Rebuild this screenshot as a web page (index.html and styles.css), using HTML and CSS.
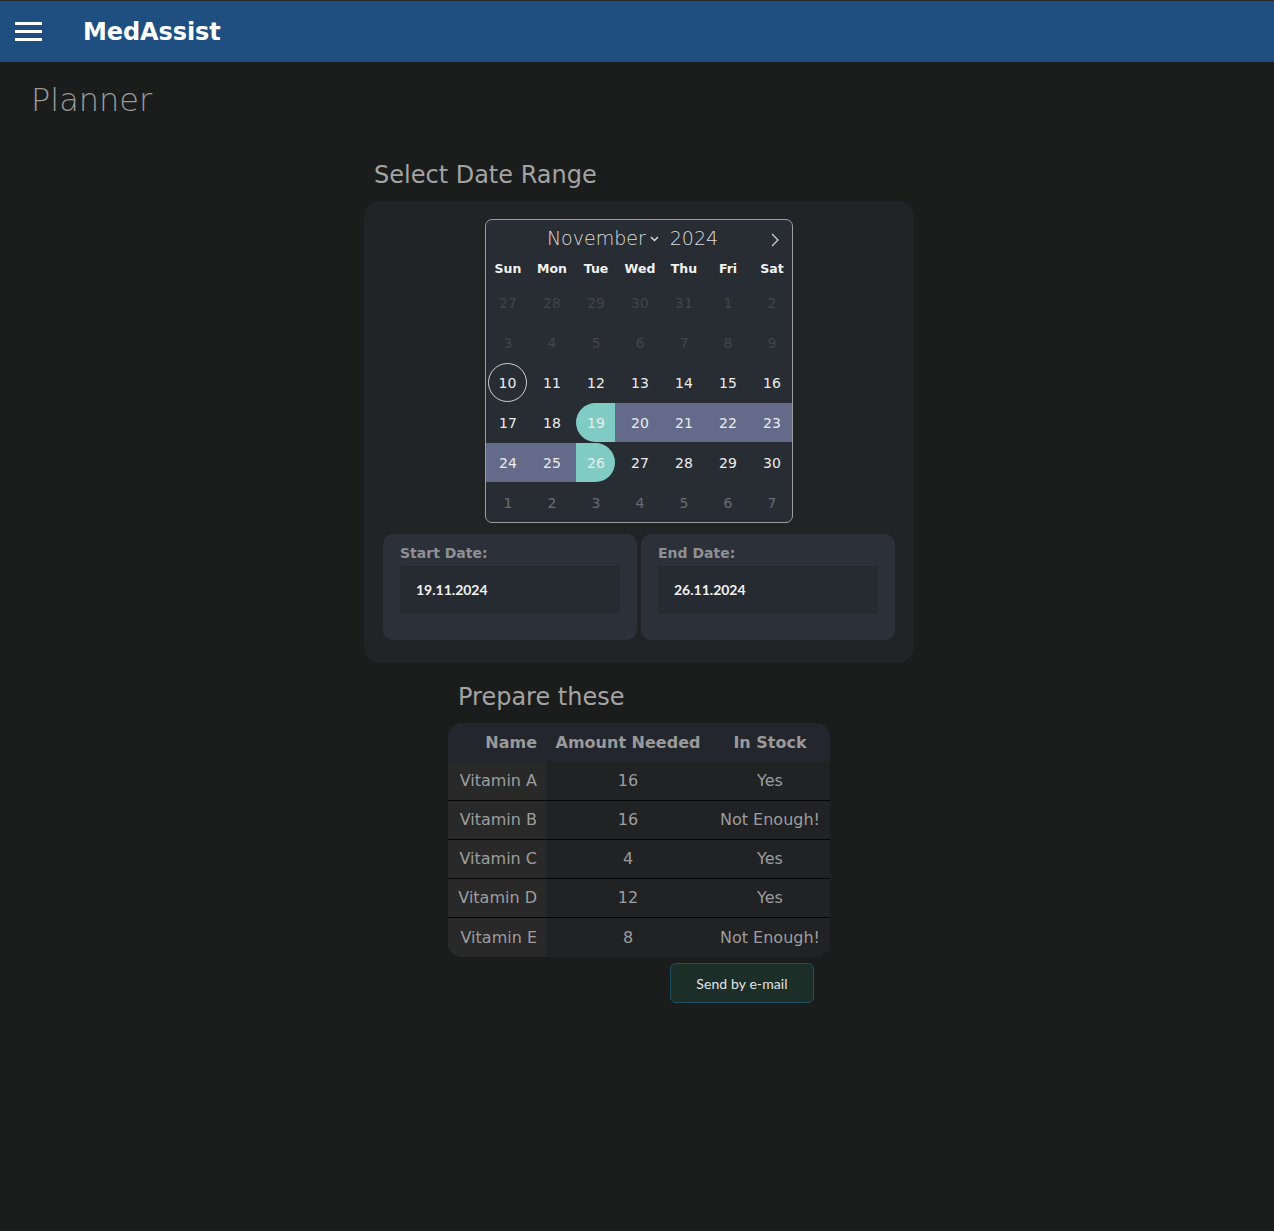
FILE: index.html
```html
<!DOCTYPE html>
<html lang="en">
<head>
<meta charset="utf-8">
<title>MedAssist - Planner</title>
<link rel="stylesheet" href="styles.css">
</head>
<body>
<header class="topbar">
  <div class="burger"><span></span><span></span><span></span></div>
  <div class="brand">MedAssist</div>
</header>
<main class="main">
  <h1 class="page-title">Planner</h1>
  <section class="range-section">
    <h2 class="section-title">Select Date Range</h2>
    <div class="card">
      <div class="calendar">
        <div class="cal-head">
          <div class="cal-month">
            <span class="month-name">November</span>
            <svg class="chev" width="9" height="6" viewBox="0 0 9 6"><path d="M1 1 L4.5 4.5 L8 1" fill="none" stroke="#d8d8d8" stroke-width="1.5"/></svg>
            <span class="year">2024</span>
          </div>
          <svg class="next" width="10" height="14" viewBox="0 0 10 14"><path d="M2 1 L8 7 L2 13" fill="none" stroke="#d0d0d0" stroke-width="1.3"/></svg>
        </div>
        <div class="weekdays">
          <span>Sun</span><span>Mon</span><span>Tue</span><span>Wed</span><span>Thu</span><span>Fri</span><span>Sat</span>
        </div>
        <div class="days">
          <div class="day off"><span>27</span></div><div class="day off"><span>28</span></div><div class="day off"><span>29</span></div><div class="day off"><span>30</span></div><div class="day off"><span>31</span></div><div class="day off"><span>1</span></div><div class="day off"><span>2</span></div>
          <div class="day off"><span>3</span></div><div class="day off"><span>4</span></div><div class="day off"><span>5</span></div><div class="day off"><span>6</span></div><div class="day off"><span>7</span></div><div class="day off"><span>8</span></div><div class="day off"><span>9</span></div>
          <div class="day today"><span>10</span></div><div class="day"><span>11</span></div><div class="day"><span>12</span></div><div class="day"><span>13</span></div><div class="day"><span>14</span></div><div class="day"><span>15</span></div><div class="day"><span>16</span></div>
          <div class="day"><span>17</span></div><div class="day"><span>18</span></div><div class="day start"><span>19</span></div><div class="day range"><span>20</span></div><div class="day range"><span>21</span></div><div class="day range"><span>22</span></div><div class="day range"><span>23</span></div>
          <div class="day range"><span>24</span></div><div class="day range"><span>25</span></div><div class="day end"><span>26</span></div><div class="day"><span>27</span></div><div class="day"><span>28</span></div><div class="day"><span>29</span></div><div class="day"><span>30</span></div>
          <div class="day next-m"><span>1</span></div><div class="day next-m"><span>2</span></div><div class="day next-m"><span>3</span></div><div class="day next-m"><span>4</span></div><div class="day next-m"><span>5</span></div><div class="day next-m"><span>6</span></div><div class="day next-m"><span>7</span></div>
        </div>
      </div>
      <div class="dates">
        <div class="date-card">
          <div class="date-label">Start Date:</div>
          <div class="date-input">19.11.2024</div>
        </div>
        <div class="date-card">
          <div class="date-label">End Date:</div>
          <div class="date-input">26.11.2024</div>
        </div>
      </div>
    </div>
  </section>
  <section class="prep-section">
    <h2 class="section-title prep-title">Prepare these</h2>
    <div class="table-wrap">
      <table class="prep-table">
        <colgroup><col class="col-name"><col class="col-amount"><col class="col-stock"></colgroup>
        <thead>
          <tr><th class="c-name">Name</th><th>Amount Needed</th><th>In Stock</th></tr>
        </thead>
        <tbody>
          <tr><td class="c-name">Vitamin A</td><td>16</td><td>Yes</td></tr>
          <tr><td class="c-name">Vitamin B</td><td>16</td><td>Not Enough!</td></tr>
          <tr><td class="c-name">Vitamin C</td><td>4</td><td>Yes</td></tr>
          <tr><td class="c-name">Vitamin D</td><td>12</td><td>Yes</td></tr>
          <tr><td class="c-name">Vitamin E</td><td>8</td><td>Not Enough!</td></tr>
        </tbody>
      </table>
    </div>
    <div class="actions">
      <button class="send-btn" type="button">Send by e-mail</button>
    </div>
  </section>
</main>
</body>
</html>
```
FILE: styles.css
```css
* { box-sizing: border-box; }
html, body { margin: 0; padding: 0; }
body {
  background: #1b1c1c;
  font-family: "DejaVu Sans", sans-serif;
  color: #e0e0e0;
  min-height: 1231px;
}
.topbar {
  height: 62px;
  border-top: 1px solid #2c2c2c;
  background: #1e4f80;
  display: flex;
  align-items: center;
}
.burger {
  margin-left: 15px;
  width: 27px;
  display: flex;
  flex-direction: column;
  gap: 5px;
}
.burger span { display: block; height: 3px; background: #ffffff; }
.brand {
  margin-left: 41px;
  font-weight: bold;
  font-size: 24px;
  color: #ffffff;
  line-height: 28px;
  letter-spacing: -0.1px;
}
.main { padding-left: 4px; }
.page-title {
  margin: 19px 0 0 27px;
  font-size: 32px;
  font-weight: 200;
  line-height: 38px;
  color: #9a9a9a;
}
.range-section { width: 550px; margin: 42px auto 0; }
.section-title {
  margin: 0 0 12px 10px;
  font-size: 24px;
  font-weight: normal;
  line-height: 28px;
  color: #a3a3a3;
}
.card {
  background: #212325;
  border-radius: 16px;
  padding: 18px 19px 23px;
}
.calendar {
  width: 308px;
  margin: 0 auto;
  border: 1px solid #9c9ea2;
  border-radius: 7px;
  background: #282c33;
  overflow: hidden;
}
.cal-head {
  position: relative;
  height: 36px;
  display: flex;
  align-items: center;
  justify-content: center;
  padding-right: 13px;
}
.cal-month { display: flex; align-items: center; }
.month-name, .year {
  font-size: 19px;
  font-weight: 300;
  color: #dcdcdc;
  line-height: 24px;
}
.chev { margin: 2px 11px 0 4px; }
.next { position: absolute; right: 12px; top: 13px; }
.weekdays {
  display: grid;
  grid-template-columns: repeat(7, 44px);
  height: 25px;
  padding-top: 1px;
  line-height: 24px;
  font-size: 12.5px;
  font-weight: bold;
  color: #f2f2f2;
  text-align: center;
  margin-bottom: 2px;
}
.days {
  display: grid;
  grid-template-columns: repeat(7, 44px);
  row-gap: 1px;
}
.day {
  height: 39px;
  display: flex;
  justify-content: flex-start;
  font-size: 14px;
  color: #ececec;
}
.day span {
  display: block;
  width: 39px;
  height: 39px;
  margin-left: 2px;
  padding-left: 1px;
  line-height: 41px;
  text-align: center;
  border-radius: 50%;
  overflow: hidden;
}
.day.off { color: #41454c; }
.day.next-m { color: #686c73; }
.day.today span { border: 1px solid #cfcfcf; line-height: 39px; padding-left: 0; }
.day.range { background: #636a8a; }
.day.start { background: linear-gradient(to right, transparent 50%, #636a8a 50%); }
.day.start span { background: #80cbc4; border-radius: 20px 0 0 20px; }
.day.end { background: linear-gradient(to right, #636a8a 50%, transparent 50%); }
.day.end span { background: #80cbc4; border-radius: 0 20px 20px 0; }
.dates {
  margin-top: 11px;
  display: flex;
  gap: 4px;
}
.date-card {
  flex: 1;
  background: #2c3139;
  border-radius: 10px;
  padding: 10px 17px 26px;
}
.date-label {
  font-size: 14px;
  font-weight: bold;
  line-height: 18px;
  color: #8e9094;
  margin-bottom: 4px;
}
.date-input {
  height: 48px;
  background: #262a31;
  border-radius: 3px;
  padding: 0 0 2px 16px;
  display: flex;
  align-items: center;
  font-family: Lato, "Liberation Sans", sans-serif;
  font-weight: bold;
  font-size: 14px;
  color: #f2f2f2;
}
.prep-section { width: 382px; margin: 20px auto 0; }
.prep-title { margin-bottom: 12px; }
.table-wrap {
  border-radius: 14px;
  overflow: hidden;
  background: #212224;
}
.prep-table {
  width: 100%;
  table-layout: fixed;
  border-collapse: collapse;
  font-size: 16px;
  color: #9d9d9d;
}
.col-name { width: 98px; }
.col-amount { width: 164px; }
.col-stock { width: 120px; }
.prep-table th {
  height: 39px;
  background: #23272d;
  font-size: 16px;
  font-weight: bold;
  color: #9a9a9a;
  padding: 0;
  text-align: center;
  white-space: nowrap;
}
.prep-table td {
  height: 38px;
  padding: 0;
  text-align: center;
  background: #212224;
  white-space: nowrap;
}
.prep-table tbody tr + tr td { border-top: 1px solid #050505; height: 39px; }
.prep-table tbody tr:last-child td { height: 40px; }
.prep-table .c-name { text-align: right; padding-right: 9px; }
.prep-table td.c-name { background: #29292a; }
.prep-table th.c-name { background: #23272d; }
.actions {
  display: flex;
  justify-content: flex-end;
  padding-right: 16px;
  margin-top: 6px;
}
.send-btn {
  height: 40px;
  width: 144px;
  background: #1b2e27;
  border: 1px solid #1f4f63;
  border-radius: 6px;
  color: #e4e4e4;
  font-family: Lato, "Liberation Sans", sans-serif;
  font-size: 14px;
  letter-spacing: 0.1px;
}
```
